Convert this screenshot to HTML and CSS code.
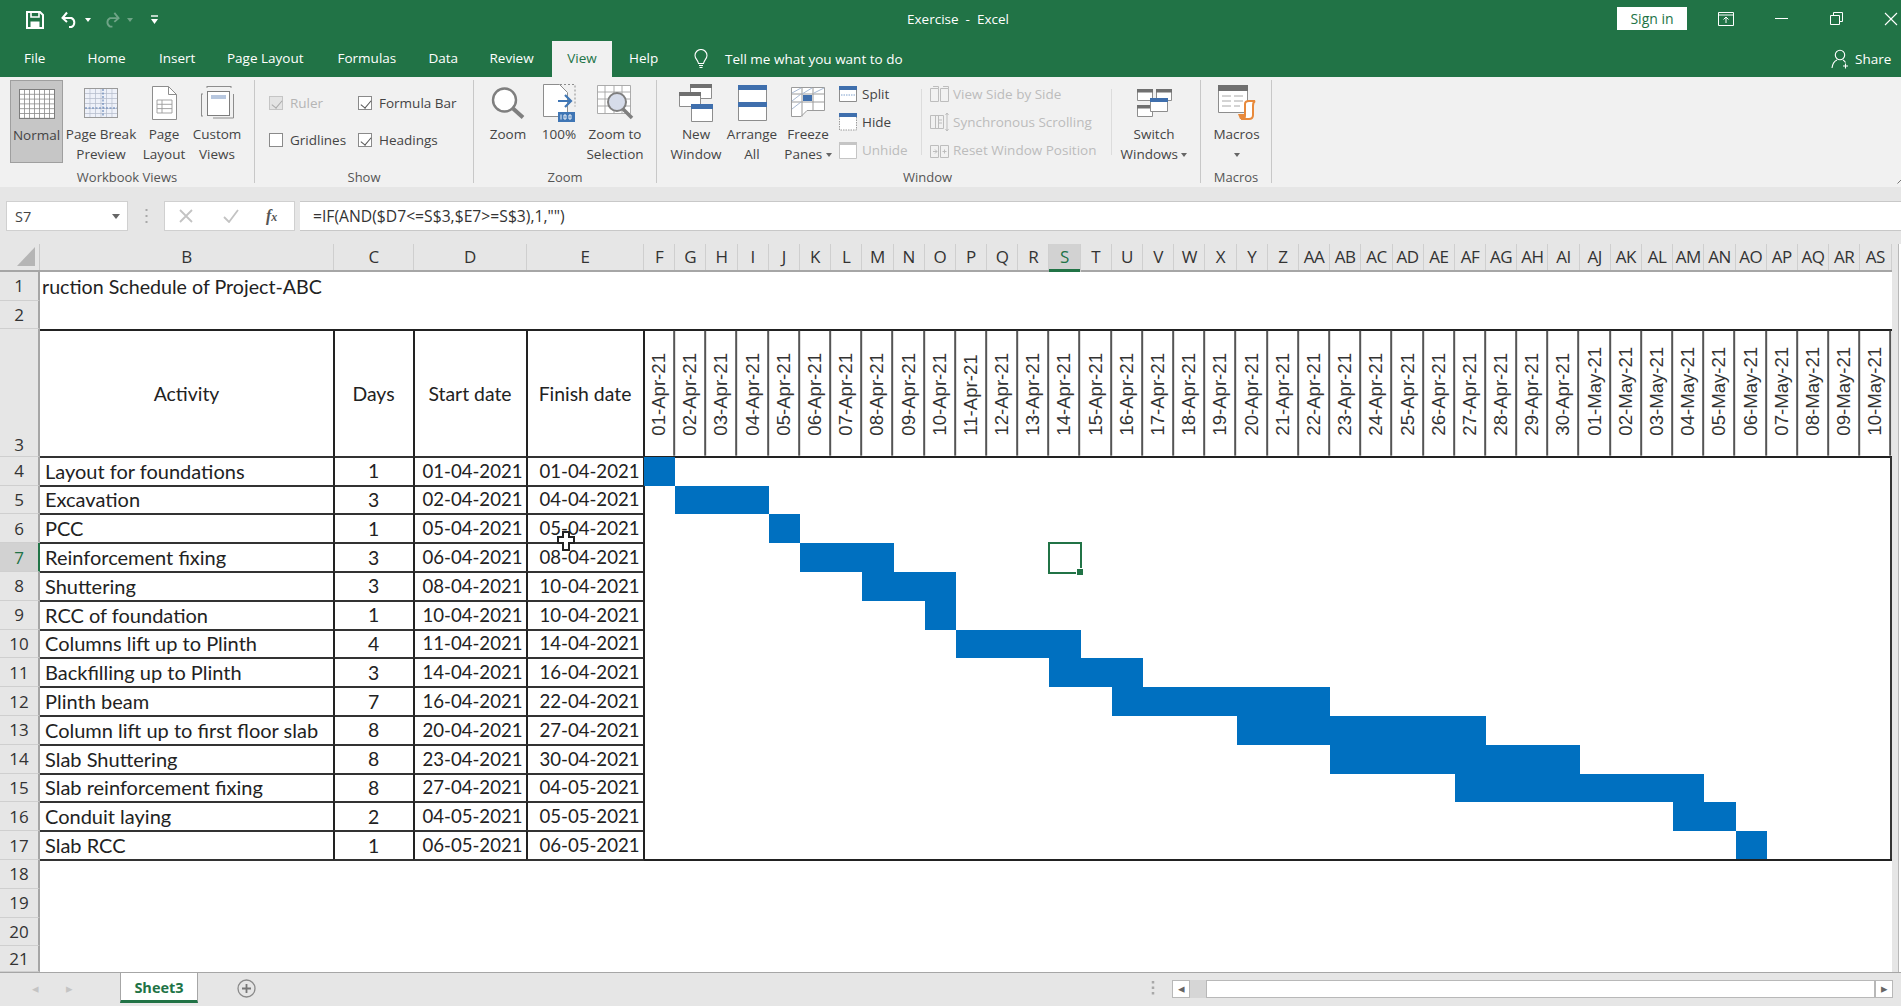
FILE: index.html
```html
<!DOCTYPE html>
<html lang="en">
<head>
<meta charset="utf-8">
<title>Exercise - Excel</title>
<link rel="stylesheet" href="styles.css">
</head>
<body>
<div class="app">
  <header class="titlebar">
    <div class="qat">
      <svg class="q-save" width="18" height="18" viewBox="0 0 18 18"><path d="M1 1h13l3 3v13H1z" fill="none" stroke="#fff" stroke-width="2"/><path d="M5 1v5h8V1" fill="none" stroke="#fff" stroke-width="1.6"/><path d="M4.500 10.500h9V17h-9z" fill="#fff"/></svg>
      <svg class="q-undo" width="18" height="17" viewBox="0 0 18 17"><path d="M1.500 7h9a5 5 0 0 1 0 9H8" fill="none" stroke="#fff" stroke-width="2"/><path d="M6 1.500 1.500 7 6 11" fill="none" stroke="#fff" stroke-width="2"/></svg>
      <span class="q-caret"></span>
      <svg class="q-redo" width="17" height="17" viewBox="0 0 18 17"><path d="M16.500 7h-9a5 5 0 0 0 0 9H10" fill="none" stroke="#fff" stroke-width="2"/><path d="M12 1.500 16.500 7 12 11" fill="none" stroke="#fff" stroke-width="2"/></svg>
      <span class="q-caret dim"></span>
      <svg class="q-more" width="9" height="10" viewBox="0 0 9 10"><path d="M1 1h7" stroke="#fff" stroke-width="1.400"/><path d="M1 4h7L4.500 9z" fill="#fff"/></svg>
    </div>
    <div class="doc-title">Exercise&nbsp; - &nbsp;Excel</div>
    <button class="signin">Sign in</button>
    <div class="win-ctl">
      <svg width="16" height="14" viewBox="0 0 16 14"><path d="M.5.500h15v13H.5zM.5 3h15" fill="none" stroke="#fff"/><path d="M8 11V5M5.500 7.500 8 5l2.500 2.500" fill="none" stroke="#fff"/></svg>
      <svg width="13" height="13" viewBox="0 0 13 13"><path d="M0 6.500h13" stroke="#fff"/></svg>
      <svg width="13" height="13" viewBox="0 0 13 13"><path d="M.5 3.500h9v9h-9zM3.500 3.500v-3h9v9h-3" fill="none" stroke="#fff"/></svg>
      <svg width="14" height="14" viewBox="0 0 14 14"><path d="M1 1l12 12M13 1 1 13" stroke="#fff" stroke-width="1.100"/></svg>
    </div>
  </header>

  <nav class="tabs">
    <span class="tab t-file">File</span>
    <span class="tab t-home">Home</span>
    <span class="tab t-insert">Insert</span>
    <span class="tab t-layout">Page Layout</span>
    <span class="tab t-formulas">Formulas</span>
    <span class="tab t-data">Data</span>
    <span class="tab t-review">Review</span>
    <span class="tab t-view">View</span>
    <span class="tab t-help">Help</span>
    <svg class="bulb" width="14" height="20" viewBox="0 0 14 20"><path d="M4.500 14.500C4 11 1 10 1 6.500a6 6 0 0 1 12 0c0 3.500-3 4.500-3.500 8z" fill="none" stroke="#fff" stroke-width="1.100"/><path d="M5 16.500h4M5.500 18.500h3" stroke="#fff" stroke-width="1.100"/></svg>
    <span class="tell">Tell me what you want to do</span>
    <span class="share">
      <svg width="20" height="20" viewBox="0 0 20 20"><circle cx="9" cy="6" r="4.700" fill="none" stroke="#fff" stroke-width="1.100"/><path d="M1 19c.5-4 2.500-7 5-8M12 11c1 .5 2 1.500 2.500 2.500M14.500 14.500v5M12 17h5" fill="none" stroke="#fff" stroke-width="1.100"/></svg>
      Share
    </span>
  </nav>

  <section class="ribbon">
    <div class="group g-views">
      <div class="body">
        <div class="btn selected w-normal">
          <div class="ico"><svg width="36" height="30" viewBox="0 0 36 30"><defs><pattern id="pn" width="5" height="4.800" patternUnits="userSpaceOnUse"><path d="M0 0h5v4.800H0z" fill="#fff"/><path d="M0 .4h5M.4 0v4.800" stroke="#8b8b8b" stroke-width=".9"/></pattern></defs><rect x=".5" y=".5" width="35" height="29" fill="url(#pn)" stroke="#7d7d7d"/></svg></div>
          <div class="lbl">Normal</div>
        </div>
        <div class="btn w-break">
          <div class="ico"><svg width="34" height="30" viewBox="0 0 34 30"><defs><pattern id="pb" width="5.500" height="5" patternUnits="userSpaceOnUse"><path d="M0 0h5.500v5H0z" fill="#eef1f9"/><path d="M0 .4h5.500M.4 0v5" stroke="#b4bccb" stroke-width=".8"/></pattern></defs><rect x=".5" y=".5" width="33" height="29" fill="url(#pb)" stroke="#9a9a9a"/><path d="M19 1v28M1 20h32" stroke="#5d7fb4" stroke-width="1.100" stroke-dasharray="2 1.500"/></svg></div>
          <div class="lbl">Page Break<br>Preview</div>
        </div>
        <div class="btn w-playout">
          <div class="ico"><svg width="25" height="34" viewBox="0 0 25 34"><path d="M.5.500h16l8 8v25H.5z" fill="#fff" stroke="#8d8d8d"/><path d="M16.500.5v8h8" fill="none" stroke="#8d8d8d"/><path d="M5 14h15v13H5zM5 18.300h15M5 22.600h15M10 14v13" fill="none" stroke="#9b9b9b" stroke-width=".9"/></svg></div>
          <div class="lbl">Page<br>Layout</div>
        </div>
        <div class="btn w-custom">
          <div class="ico"><svg width="33" height="33" viewBox="0 0 33 33"><path d="M6 .5h24M6 0v2M30 0v2M.5 8v22M0 8h2M0 30h2" stroke="#8d8d8d" fill="none"/><path d="M12 32h20.500V8" stroke="#8d8d8d" fill="none"/><rect x="6.500" y="5.500" width="22" height="24" fill="#fff" stroke="#7d7d7d"/><rect x="10" y="9" width="15" height="4" fill="#b7c7df"/></svg></div>
          <div class="lbl">Custom<br>Views</div>
        </div>
      </div>
      <div class="glabel">Workbook Views</div>
    </div>

    <div class="group g-show">
      <div class="body checks">
        <label class="chk off"><span class="box on"></span>Ruler</label>
        <label class="chk"><span class="box on"></span>Formula Bar</label>
        <label class="chk"><span class="box"></span>Gridlines</label>
        <label class="chk"><span class="box on"></span>Headings</label>
      </div>
      <div class="glabel">Show</div>
    </div>

    <div class="group g-zoom">
      <div class="body">
        <div class="btn w-zoom">
          <div class="ico"><svg width="34" height="32" viewBox="0 0 34 32"><circle cx="13.500" cy="13" r="11.500" fill="#fff" stroke="#7f7f7f" stroke-width="2.400"/><path d="M22 21.500 32 30.500" stroke="#7f7f7f" stroke-width="4"/></svg></div>
          <div class="lbl">Zoom</div>
        </div>
        <div class="btn w-100">
          <div class="ico"><svg width="33" height="38" viewBox="0 0 33 38"><path d="M.5.500h16l8 8v24H.5z" fill="#fff" stroke="#8d8d8d"/><path d="M17 .5h15v22" fill="none" stroke="#8d8d8d" stroke-dasharray="2 2"/><path d="M15 17h13M22 11l6 6-6 6" fill="none" stroke="#3f76b5" stroke-width="2.200"/><rect x="15" y="28" width="17" height="10" fill="#3f76b5"/><path d="M18 30.500v5M21 31h2v4h-2zM26 31h2v4h-2z" fill="none" stroke="#fff" stroke-width=".9"/></svg></div>
          <div class="lbl">100%</div>
        </div>
        <div class="btn w-zts">
          <div class="ico"><svg width="37" height="35" viewBox="0 0 37 35"><path d="M.5.500h33v28H.5zM.5 7h33M.5 14h33M.5 21h33M8 .5v28M17 .5v28M25 .5v28" fill="#fff" stroke="#a3a3a3" stroke-width=".9"/><circle cx="20" cy="17" r="9" fill="#d6dcea" stroke="#7f7f7f" stroke-width="2"/><path d="M26 24l9 9" stroke="#7f7f7f" stroke-width="3.500"/></svg></div>
          <div class="lbl">Zoom to<br>Selection</div>
        </div>
      </div>
      <div class="glabel">Zoom</div>
    </div>

    <div class="group g-window">
      <div class="body">
        <div class="btn w-new">
          <div class="ico"><svg width="34" height="38" viewBox="0 0 34 38"><path d="M11.500 .5h21v14h-21z" fill="#fff" stroke="#8d8d8d"/><path d="M11 0h22v4H11z" fill="#707070"/><path d="M.5 8.500h21v14H.5z" fill="#fff" stroke="#8d8d8d"/><path d="M0 8h22v4H0z" fill="#707070"/><path d="M12.500 20.500h21v17h-21z" fill="#fff" stroke="#8d8d8d"/><path d="M12 20h22v5H12z" fill="#3f6fad"/></svg></div>
          <div class="lbl">New<br>Window</div>
        </div>
        <div class="btn w-arrange">
          <div class="ico"><svg width="29" height="36" viewBox="0 0 29 36"><path d="M.5.500h28v35H.5z" fill="#fff" stroke="#8d8d8d"/><path d="M0 0h29v5H0zM0 17h29v5H0z" fill="#3f6fad"/></svg></div>
          <div class="lbl">Arrange<br>All</div>
        </div>
        <div class="btn w-freeze">
          <div class="ico"><svg width="34" height="31" viewBox="0 0 34 31"><path d="M.5.500h33v23H16l-6 6H.5z" fill="#fff" stroke="#9b9b9b"/><path d="M.5 7h33M.5 15h33M11 .5v29M22 .5v23" stroke="#9b9b9b" fill="none"/><path d="M1 6l9-5M1 14l9-7M1 22l9-7M11 7l10-6M23 6l10-5" stroke="#a9bad3" fill="none"/><rect x="12" y="8" width="9" height="6" fill="#3f6fad"/></svg></div>
          <div class="lbl">Freeze<br>Panes <span class="caret"></span></div>
        </div>
        <div class="cmds c-win">
          <div class="cmd"><svg width="18" height="16" viewBox="0 0 18 16"><path d="M.5.500h17v15H.5z" fill="#fff" stroke="#8d8d8d"/><path d="M0 0h18v4H0z" fill="#3f6fad"/><path d="M2 9h14" stroke="#7fa0cc" stroke-dasharray="1.500 1"/></svg>Split</div>
          <div class="cmd"><svg width="18" height="18" viewBox="0 0 18 18"><path d="M.5 1h17v16H.5z" fill="#fff" stroke="#9b9b9b" stroke-dasharray="1.500 1"/><path d="M0 0h18v4H0z" fill="#3f6fad"/></svg>Hide</div>
          <div class="cmd off"><svg width="18" height="17" viewBox="0 0 18 17"><path d="M.5.500h17v16H.5z" fill="#fff" stroke="#c5c5c5"/><path d="M0 0h18v3H0z" fill="#c5c5c5"/></svg>Unhide</div>
        </div>
        <span class="vsep"></span>
        <div class="cmds c-side">
          <div class="cmd off"><svg width="19" height="16" viewBox="0 0 19 16"><path d="M.5 2.500h8v13h-8zM10.500 2.500h8v13h-8zM3 .5h5.500v2M13 .5h5.500v2" fill="none" stroke="#bdbdbd"/></svg>View Side by Side</div>
          <div class="cmd off"><svg width="19" height="18" viewBox="0 0 19 18"><path d="M.5 2.500h8v13h-8zM5.500 2.500h8v13h-8zM8 7h4M8 10h4" fill="none" stroke="#bdbdbd"/><path d="M17 0v18M15.500 2 17 0l1.500 2M15.500 16l1.500 2 1.500-2" fill="none" stroke="#bdbdbd"/></svg>Synchronous Scrolling</div>
          <div class="cmd off"><svg width="19" height="15" viewBox="0 0 19 15"><path d="M.5 2.500h8v12h-8zM10.500 2.500h8v12h-8zM3 8.500h4M5 6.500l2 2-2 2M12.500 8.500h4M14.500 6.500v4" fill="none" stroke="#bdbdbd"/></svg>Reset Window Position</div>
        </div>
        <span class="vsep"></span>
        <div class="btn w-switch">
          <div class="ico"><svg width="35" height="28" viewBox="0 0 35 28"><path d="M.5.500h15v11H.5zM19.500.5h15v11h-15zM.5 16.500h15v11H.5z" fill="#fff" stroke="#8d8d8d"/><path d="M0 0h16v3.500H0zM19 0h16v3.500H19zM0 16h16v3.500H0z" fill="#707070"/><path d="M13.500 9.500h17v13h-17z" fill="#fff" stroke="#8d8d8d"/><path d="M13 9h18v4H13z" fill="#3f6fad"/></svg></div>
          <div class="lbl">Switch<br>Windows <span class="caret"></span></div>
        </div>
      </div>
      <div class="glabel gl-window">Window</div>
    </div>

    <div class="group g-macros">
      <div class="body">
        <div class="btn w-macros">
          <div class="ico"><svg width="38" height="35" viewBox="0 0 38 35"><path d="M.5.500h29v27H.5z" fill="#fff" stroke="#8d8d8d"/><path d="M0 0h30v6H0z" fill="#707070"/><path d="M4 11h9M16 11h9M4 16h9M16 16h9M4 21h9M16 21h6" stroke="#a8a8a8"/><path d="M23 34c3 0 4-1 4-3V19c0-2 2-3 4-3h6c-2 1-2 3-2 5v9c0 3-2 4-4 4z" fill="#fff" stroke="#e88a3c" stroke-width="2"/><path d="M20 29h7v5h-5z" fill="#e88a3c"/></svg></div>
          <div class="lbl">Macros<br><span class="caret"></span></div>
        </div>
      </div>
      <div class="glabel">Macros</div>
    </div>
    <svg class="collapse" width="8" height="5" viewBox="0 0 8 5"><path d="M.5 4.500 4 1l3.500 3.500" fill="none" stroke="#777"/></svg>
  </section>

  <section class="formula">
    <div class="namebox"><span>S7</span><i class="caret dark"></i></div>
    <svg class="grip" width="3" height="14" viewBox="0 0 3 14"><path d="M1.500 0v2M1.500 6v2M1.500 12v2" stroke="#a8a8a8" stroke-width="2"/></svg>
    <div class="fxbox">
      <svg width="14" height="14" viewBox="0 0 14 14"><path d="M1 1l12 12M13 1 1 13" stroke="#c3c3c3" stroke-width="1.800"/></svg>
      <svg width="16" height="14" viewBox="0 0 16 14"><path d="M1 8l5 5L15 1" fill="none" stroke="#c3c3c3" stroke-width="1.800"/></svg>
      <span class="fx">f<small>x</small></span>
    </div>
    <div class="input">=IF(AND($D7&lt;=S$3,$E7&gt;=S$3),1,"")</div>
  </section>

  <section class="sheet">
    <div class="grid">
      <div class="colhead">
        <div class="corner"><svg width="18" height="19" viewBox="0 0 18 19"><path d="M18 0v19H0z" fill="#b5b5b5"/></svg></div>
        <span class="col wb">B</span><span class="col wc">C</span><span class="col wd">D</span><span class="col we">E</span>
        <span class="col">F</span><span class="col">G</span><span class="col">H</span><span class="col">I</span><span class="col">J</span><span class="col">K</span><span class="col">L</span><span class="col">M</span><span class="col">N</span><span class="col">O</span><span class="col">P</span><span class="col">Q</span><span class="col">R</span><span class="col sel">S</span><span class="col">T</span><span class="col">U</span><span class="col">V</span><span class="col">W</span><span class="col">X</span><span class="col">Y</span><span class="col">Z</span><span class="col">AA</span><span class="col">AB</span><span class="col">AC</span><span class="col">AD</span><span class="col">AE</span><span class="col">AF</span><span class="col">AG</span><span class="col">AH</span><span class="col">AI</span><span class="col">AJ</span><span class="col">AK</span><span class="col">AL</span><span class="col">AM</span><span class="col">AN</span><span class="col">AO</span><span class="col">AP</span><span class="col">AQ</span><span class="col">AR</span><span class="col">AS</span>
      </div>

      <div class="row r1"><span class="num">1</span><div class="title-cell">ruction Schedule of Project-ABC</div></div>
      <div class="row r2"><span class="num">2</span></div>

      <div class="row r3">
        <span class="num bottom">3</span>
        <span class="c ctr">Activity</span><span class="c ctr">Days</span><span class="c ctr">Start date</span><span class="c ctr">Finish date</span>
        <div class="dates">
          <span>01-Apr-21</span><span>02-Apr-21</span><span>03-Apr-21</span><span>04-Apr-21</span><span>05-Apr-21</span><span>06-Apr-21</span><span>07-Apr-21</span><span>08-Apr-21</span><span>09-Apr-21</span><span>10-Apr-21</span><span>11-Apr-21</span><span>12-Apr-21</span><span>13-Apr-21</span><span>14-Apr-21</span><span>15-Apr-21</span><span>16-Apr-21</span><span>17-Apr-21</span><span>18-Apr-21</span><span>19-Apr-21</span><span>20-Apr-21</span><span>21-Apr-21</span><span>22-Apr-21</span><span>23-Apr-21</span><span>24-Apr-21</span><span>25-Apr-21</span><span>26-Apr-21</span><span>27-Apr-21</span><span>28-Apr-21</span><span>29-Apr-21</span><span>30-Apr-21</span><span>01-May-21</span><span>02-May-21</span><span>03-May-21</span><span>04-May-21</span><span>05-May-21</span><span>06-May-21</span><span>07-May-21</span><span>08-May-21</span><span>09-May-21</span><span>10-May-21</span>
        </div>
      </div>

      <div class="row"><span class="num">4</span><span class="c">Layout for foundations</span><span class="c ctr">1</span><span class="c ctr">01-04-2021</span><span class="c ctr">01-04-2021</span><div class="gantt"><i class="bar" style="grid-column:1/2"></i></div></div>
      <div class="row"><span class="num">5</span><span class="c">Excavation</span><span class="c ctr">3</span><span class="c ctr">02-04-2021</span><span class="c ctr">04-04-2021</span><div class="gantt"><i class="bar" style="grid-column:2/5"></i></div></div>
      <div class="row"><span class="num">6</span><span class="c">PCC</span><span class="c ctr">1</span><span class="c ctr">05-04-2021</span><span class="c ctr">05-04-2021</span><div class="gantt"><i class="bar" style="grid-column:5/6"></i></div></div>
      <div class="row"><span class="num active">7</span><span class="c">Reinforcement fixing</span><span class="c ctr">3</span><span class="c ctr">06-04-2021</span><span class="c ctr">08-04-2021</span><div class="gantt"><i class="bar" style="grid-column:6/9"></i><b class="cursor-cell"></b></div></div>
      <div class="row"><span class="num">8</span><span class="c">Shuttering</span><span class="c ctr">3</span><span class="c ctr">08-04-2021</span><span class="c ctr">10-04-2021</span><div class="gantt"><i class="bar" style="grid-column:8/11"></i></div></div>
      <div class="row"><span class="num">9</span><span class="c">RCC of foundation</span><span class="c ctr">1</span><span class="c ctr">10-04-2021</span><span class="c ctr">10-04-2021</span><div class="gantt"><i class="bar" style="grid-column:10/11"></i></div></div>
      <div class="row"><span class="num">10</span><span class="c">Columns lift up to Plinth</span><span class="c ctr">4</span><span class="c ctr">11-04-2021</span><span class="c ctr">14-04-2021</span><div class="gantt"><i class="bar" style="grid-column:11/15"></i></div></div>
      <div class="row"><span class="num">11</span><span class="c">Backfilling up to Plinth</span><span class="c ctr">3</span><span class="c ctr">14-04-2021</span><span class="c ctr">16-04-2021</span><div class="gantt"><i class="bar" style="grid-column:14/17"></i></div></div>
      <div class="row"><span class="num">12</span><span class="c">Plinth beam</span><span class="c ctr">7</span><span class="c ctr">16-04-2021</span><span class="c ctr">22-04-2021</span><div class="gantt"><i class="bar" style="grid-column:16/23"></i></div></div>
      <div class="row"><span class="num">13</span><span class="c">Column lift up to first floor slab</span><span class="c ctr">8</span><span class="c ctr">20-04-2021</span><span class="c ctr">27-04-2021</span><div class="gantt"><i class="bar" style="grid-column:20/28"></i></div></div>
      <div class="row"><span class="num">14</span><span class="c">Slab Shuttering</span><span class="c ctr">8</span><span class="c ctr">23-04-2021</span><span class="c ctr">30-04-2021</span><div class="gantt"><i class="bar" style="grid-column:23/31"></i></div></div>
      <div class="row"><span class="num">15</span><span class="c">Slab reinforcement fixing</span><span class="c ctr">8</span><span class="c ctr">27-04-2021</span><span class="c ctr">04-05-2021</span><div class="gantt"><i class="bar" style="grid-column:27/35"></i></div></div>
      <div class="row"><span class="num">16</span><span class="c">Conduit laying</span><span class="c ctr">2</span><span class="c ctr">04-05-2021</span><span class="c ctr">05-05-2021</span><div class="gantt"><i class="bar" style="grid-column:34/36"></i></div></div>
      <div class="row last"><span class="num">17</span><span class="c">Slab RCC</span><span class="c ctr">1</span><span class="c ctr">06-05-2021</span><span class="c ctr">06-05-2021</span><div class="gantt"><i class="bar" style="grid-column:36/37"></i></div></div>

      <div class="row"><span class="num">18</span></div>
      <div class="row"><span class="num">19</span></div>
      <div class="row"><span class="num">20</span></div>
      <div class="row r21"><span class="num">21</span></div>

      <svg class="pointer" width="18" height="20" viewBox="0 0 18 20"><path d="M6 1h6v5h5v6h-5v7H6v-7H1V6h5z" fill="#fff" stroke="#222" stroke-width="2"/></svg>
    </div>
    <div class="vrail"></div>
  </section>

  <footer class="sheetbar">
    <span class="nav">&#9666;</span><span class="nav n2">&#9656;</span>
    <span class="sheet-tab">Sheet3</span>
    <svg class="add" width="19" height="19" viewBox="0 0 19 19"><circle cx="9.500" cy="9.500" r="8.500" fill="none" stroke="#8a8a8a" stroke-width="1.300"/><path d="M9.500 5v9M5 9.500h9" stroke="#777" stroke-width="1.800"/></svg>
    <svg class="dots" width="4" height="14" viewBox="0 0 4 14"><path d="M2 0v2.500M2 5.500V8M2 11v2.500" stroke="#a8a8a8" stroke-width="2.500"/></svg>
    <div class="hscroll">
      <span class="sbtn">&#9666;</span>
      <span class="sgap"></span>
      <span class="strack"></span>
      <span class="sbtn">&#9656;</span>
    </div>
  </footer>
</div>
</body>
</html>
```
FILE: styles.css
```css
* { box-sizing: border-box; }
html, body { margin: 0; padding: 0; }
body { width: 1901px; height: 1006px; overflow: hidden; background: #fff; font-family: "Open Sans", "Noto Sans", sans-serif; color: #444; }
.app { width: 1901px; height: 1006px; display: flex; flex-direction: column; overflow: hidden; position: relative; }

/* title bar */
.titlebar { height: 41px; background: #217346; display: flex; align-items: flex-start; color: #fff; flex: none; }
.qat { width: 907px; height: 41px; display: flex; align-items: center; padding: 0 0 2px 26px; flex: none; }
.q-undo { margin-left: 17px; }
.q-caret { width: 0; height: 0; border: 3.5px solid transparent; border-top: 4px solid #fff; border-bottom: 0; margin-left: 6px; }
.q-caret.dim, .q-redo { opacity: .35; }
.q-redo { margin-left: 12px; }
.q-caret.dim { margin-left: 7px; }
.q-more { margin-left: 17px; }
.doc-title { width: 710px; font-size: 13.5px; line-height: 38px; flex: none; white-space: nowrap; }
.signin { width: 70px; height: 23px; margin-top: 7px; background: #fff; border: 0; padding: 0; color: #217346; font: 14px "Open Sans", sans-serif; flex: none; }
.win-ctl { display: flex; align-items: center; height: 37px; margin-left: 31px; flex: none; }
.win-ctl svg { margin-right: 41px; flex: none; }
.win-ctl svg:nth-child(2) { margin-right: 42px; }

/* tabs */
.tabs { height: 36px; background: #217346; display: flex; align-items: center; color: #fff; font-size: 13.5px; position: relative; flex: none; }
.tab { height: 36px; line-height: 34px; flex: none; white-space: nowrap; }
.t-file { width: 87.500px; padding-left: 24px; }
.t-home { width: 71.500px; }
.t-insert { width: 68px; }
.t-layout { width: 110.500px; }
.t-formulas { width: 91px; }
.t-data { width: 61px; }
.t-review { width: 62.500px; }
.t-view { width: 60px; background: #f1f1f1; color: #217346; text-align: center; margin-right: 17px; }
.t-help { width: 65px; }
.bulb { flex: none; margin-right: 17px; margin-top: -1px; }
.tell { flex: none; width: 1106px; }
.share { display: flex; align-items: center; gap: 4px; flex: none; }

/* ribbon */
.ribbon { height: 110px; background: #f1f1f1; display: flex; padding-top: 3px; flex: none; }
.group { height: 103px; display: flex; flex-direction: column; border-right: 1px solid #c8c8c8; flex: none; }
.body { height: 87px; display: flex; flex: none; }
.glabel { height: 16px; line-height: 21px; font-size: 13px; text-align: center; color: #555; white-space: nowrap; }
.g-views { width: 255px; }
.g-views .body { padding-left: 10px; }
.g-show { width: 219px; }
.g-zoom { width: 183px; }
.g-zoom .body { padding-left: 9px; }
.g-window { width: 544px; }
.g-window .body { padding-left: 13px; }
.gl-window { padding-right: 2px; }
.g-macros { width: 71px; }
.btn { display: flex; flex-direction: column; align-items: center; height: 83px; flex: none; font-size: 13.500px; line-height: 19.500px; text-align: center; white-space: nowrap; }
.ico { height: 45px; display: flex; align-items: center; justify-content: center; flex: none; }
.selected { background: #c6c6c6; border: 1px solid #9f9f9f; }
.w-normal { width: 53px; }
.w-break { width: 76px; }
.w-playout { width: 50px; }
.w-custom { width: 56px; }
.w-zoom { width: 50px; }
.w-100 { width: 52px; }
.w-zts { width: 60px; }
.w-new { width: 52px; }
.w-arrange { width: 60px; }
.w-freeze { width: 52px; }
.w-switch { width: 72px; margin-left: 6px; }
.w-macros { width: 71px; }
.caret { display: inline-block; width: 0; height: 0; border: 3px solid transparent; border-top: 4px solid #666; border-bottom: 0; vertical-align: middle; }
.checks { display: grid; grid-template-columns: 89px 1fr; grid-template-rows: 37px 37px; padding: 4px 0 0 14px; font-size: 13.500px; }
.chk { display: flex; align-items: center; gap: 7px; white-space: nowrap; }
.chk.off { color: #b5b5b5; }
.box { width: 14px; height: 14px; background: #fff; border: 1px solid #8a8a8a; position: relative; flex: none; }
.box.on::after { content: ""; position: absolute; left: 3.500px; top: 1px; width: 5px; height: 9px; border: solid #555; border-width: 0 1px 1px 0; transform: rotate(40deg); }
.chk.off .box { border-color: #c5c5c5; background: #e4e4e4; }
.chk.off .box::after { border-color: #aaa; }
.cmds { display: flex; flex-direction: column; font-size: 13.500px; flex: none; }
.cmd { height: 28px; display: flex; align-items: center; gap: 5px; white-space: nowrap; flex: none; }
.cmd.off { color: #bcbcbc; }
.c-win { width: 82px; margin-left: 5px; }
.c-side { width: 189px; padding-left: 8px; }
.c-side .cmd { gap: 4px; }
.vsep { width: 1px; height: 66px; margin-top: 9px; background: #dcdcdc; flex: none; }
.collapse { align-self: flex-end; margin: 0 0 3px 625px; flex: none; }

/* formula bar */
.formula { height: 57px; background: #e6e6e6; padding: 14px 0 13px 6px; display: flex; align-items: stretch; flex: none; }
.namebox { width: 122px; background: #fff; border: 1px solid #d0d0d0; display: flex; align-items: center; justify-content: space-between; padding: 0 7px 0 8px; font-size: 14.500px; }
.caret.dark { border-width: 4px; border-top-width: 5px; border-top-color: #666; border-bottom: 0; }
.grip { align-self: center; margin: 0 16px 0 17px; flex: none; }
.fxbox { width: 131px; background: #fff; border: 1px solid #d0d0d0; display: flex; align-items: center; padding-left: 14px; flex: none; }
.fxbox svg:nth-child(2) { margin-left: 30px; }
.fx { margin-left: 27px; font: italic 700 16px "Liberation Serif", serif; color: #555; }
.fx small { font-size: 12px; }
.input { flex: 1; margin-left: 5px; background: #fff; border-top: 1px solid #c8c8c8; border-bottom: 1px solid #c8c8c8; padding-left: 13px; line-height: 28px; font-size: 15.700px; color: #333; white-space: nowrap; }

/* sheet */
.sheet { height: 728px; display: flex; flex: none; position: relative; }
.grid { width: 1892px; flex: none; position: relative; }
.vrail { flex: 1; background: linear-gradient(90deg, #e6e6e6 6px, #b8b8b8 6px, #b8b8b8 7px, #fff 7px); }
.colhead { height: 28px; display: flex; background: #e6e6e6; border-bottom: 2px solid #a6a6a6; }
.corner { width: 40px; height: 26px; flex: none; display: flex; justify-content: flex-end; align-items: flex-end; padding: 0 4px 4px 0; border-right: 1px solid #c9c9c9; }
.col { width: 31.200px; flex: none; text-align: center; font-size: 17px; line-height: 26px; color: #333; border-right: 1px solid #cfcfcf; white-space: nowrap; overflow: hidden; letter-spacing: -.5px; }
.wb { width: 294px; } .wc { width: 80px; } .wd { width: 113px; } .we { width: 117px; }
.col.sel { background: #d2d2d2; color: #217346; box-shadow: inset 0 -3px 0 #217346; height: 28px; }

.row { display: grid; grid-template-columns: 40px 294px 80px 113px 117px 1248px; height: 28.800px; font-family: Lato, "Open Sans", sans-serif; font-size: 20px; color: #222; }
.r2 { height: 28.300px; }
.r3 { height: 127.700px; }
.r21 { height: 25.600px; }
.num { background: #e6e6e6; border-right: 2px solid #a6a6a6; border-bottom: 1px solid #cfcfcf; font-family: "Open Sans", sans-serif; font-size: 17px; color: #333; display: flex; align-items: center; justify-content: center; }
.num.bottom { align-items: flex-end; }
.num.active { background: #d2d2d2; color: #217346; border-right-color: #217346; }
.title-cell { grid-column: 2 / 7; display: flex; align-items: center; padding-left: 2px; font-size: 19.650px; white-space: nowrap; }
.c { display: flex; align-items: center; padding: 0 0 0 5px; margin: 0 -1px -1px 0; border-right: 2px solid #222; border-bottom: 2px solid #333; white-space: nowrap; }
.ctr { justify-content: center; padding-left: 0; font-size: 19.400px; }
.row:not(.r3) .c:nth-child(n+4) { justify-content: flex-end; padding-right: 3.500px; font-size: 18.600px; }
.r3 .c { border-top: 2px solid #222; }
.dates { display: grid; grid-template-columns: repeat(40, 31.200px); border-top: 2px solid #222; border-bottom: 2px solid #222; margin-bottom: -1px; }
.dates span { writing-mode: vertical-rl; transform: rotate(180deg); display: flex; align-items: center; justify-content: flex-start; padding-top: 20px; border-left: 2px solid #555; font-family: "Liberation Sans", Arial, sans-serif; font-size: 18.600px; color: #333; white-space: nowrap; min-width: 0; overflow: hidden; }
.gantt { display: grid; grid-template-columns: repeat(40, 31.200px); grid-template-rows: 100%; box-shadow: inset -2px 0 0 #333; }
.bar { grid-row: 1; background: #0070c0; display: block; }
.last .gantt { border-bottom: 2px solid #222; margin-bottom: -1px; }
.cursor-cell { grid-row: 1; grid-column: 14 / 15; border: 2px solid #217346; margin: -1px -1px -2px -1px; position: relative; }
.cursor-cell::after { content: ""; position: absolute; right: -4px; bottom: -4px; width: 6px; height: 6px; background: #217346; border: 1px solid #fff; }
.pointer { position: absolute; left: 557px; top: 287px; }

/* sheet bar */
.sheetbar { height: 34px; background: #e6e6e6; border-top: 1px solid #a6a6a6; display: flex; align-items: flex-start; position: relative; flex: none; }
.nav { width: 34px; font-size: 13px; color: #c4c4c4; line-height: 30px; text-align: center; margin-left: 18px; flex: none; }
.nav.n2 { margin-left: 0; width: 34px; }
.sheet-tab { width: 78px; height: 30px; margin-left: 34px; background: #fff; border: 1px solid #a6a6a6; border-top: 0; border-bottom: 3px solid #217346; color: #217346; font-weight: 700; font-size: 14.500px; line-height: 29px; text-align: center; flex: none; }
.add { margin: 6px 0 0 39px; flex: none; }
.dots { margin: 8px 0 0 895px; flex: none; }
.hscroll { display: flex; height: 18px; margin: 7px 0 0 17px; flex: none; }
.sbtn { width: 18px; height: 18px; background: #fff; border: 1px solid #b8b8b8; font-size: 13px; line-height: 15px; text-align: center; color: #666; flex: none; }
.sgap { width: 16px; background: #d6d6d6; flex: none; }
.strack { width: 669px; background: #fff; border: 1px solid #b8b8b8; flex: none; }
```
